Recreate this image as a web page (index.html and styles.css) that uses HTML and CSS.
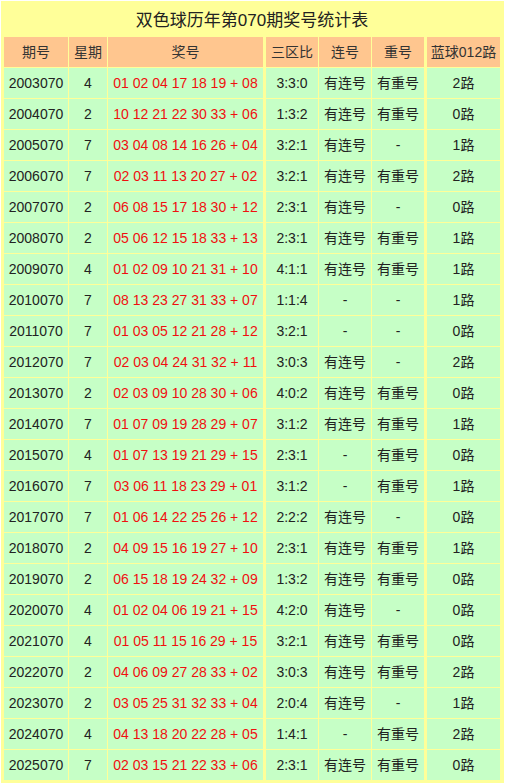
FILE: index.html
```html
<!DOCTYPE html>
<html lang="zh-CN">
<head>
<meta charset="utf-8">
<title>双色球历年第070期奖号统计表</title>
<link rel="stylesheet" href="styles.css">
</head>
<body>
<div class="box">
  <div class="title">双色球历年第070期奖号统计表</div>
  <table class="stats">
    <thead>
      <tr><th class="c1">期号</th><th class="c2">星期</th><th class="c3">奖号</th><th class="c4">三区比</th><th class="c5">连号</th><th class="c6">重号</th><th class="c7">蓝球012路</th></tr>
    </thead>
    <tbody>
      <tr><td>2003070</td><td>4</td><td class="num">01 02 04 17 18 19 + 08</td><td class="c4">3:3:0</td><td>有连号</td><td>有重号</td><td class="c7">2路</td></tr>
      <tr><td>2004070</td><td>2</td><td class="num">10 12 21 22 30 33 + 06</td><td class="c4">1:3:2</td><td>有连号</td><td>有重号</td><td class="c7">0路</td></tr>
      <tr><td>2005070</td><td>7</td><td class="num">03 04 08 14 16 26 + 04</td><td class="c4">3:2:1</td><td>有连号</td><td>-</td><td class="c7">1路</td></tr>
      <tr><td>2006070</td><td>7</td><td class="num">02 03 11 13 20 27 + 02</td><td class="c4">3:2:1</td><td>有连号</td><td>有重号</td><td class="c7">2路</td></tr>
      <tr><td>2007070</td><td>2</td><td class="num">06 08 15 17 18 30 + 12</td><td class="c4">2:3:1</td><td>有连号</td><td>-</td><td class="c7">0路</td></tr>
      <tr><td>2008070</td><td>2</td><td class="num">05 06 12 15 18 33 + 13</td><td class="c4">2:3:1</td><td>有连号</td><td>有重号</td><td class="c7">1路</td></tr>
      <tr><td>2009070</td><td>4</td><td class="num">01 02 09 10 21 31 + 10</td><td class="c4">4:1:1</td><td>有连号</td><td>有重号</td><td class="c7">1路</td></tr>
      <tr><td>2010070</td><td>7</td><td class="num">08 13 23 27 31 33 + 07</td><td class="c4">1:1:4</td><td>-</td><td>-</td><td class="c7">1路</td></tr>
      <tr><td>2011070</td><td>7</td><td class="num">01 03 05 12 21 28 + 12</td><td class="c4">3:2:1</td><td>-</td><td>-</td><td class="c7">0路</td></tr>
      <tr><td>2012070</td><td>7</td><td class="num">02 03 04 24 31 32 + 11</td><td class="c4">3:0:3</td><td>有连号</td><td>-</td><td class="c7">2路</td></tr>
      <tr><td>2013070</td><td>2</td><td class="num">02 03 09 10 28 30 + 06</td><td class="c4">4:0:2</td><td>有连号</td><td>有重号</td><td class="c7">0路</td></tr>
      <tr><td>2014070</td><td>7</td><td class="num">01 07 09 19 28 29 + 07</td><td class="c4">3:1:2</td><td>有连号</td><td>有重号</td><td class="c7">1路</td></tr>
      <tr><td>2015070</td><td>4</td><td class="num">01 07 13 19 21 29 + 15</td><td class="c4">2:3:1</td><td>-</td><td>有重号</td><td class="c7">0路</td></tr>
      <tr><td>2016070</td><td>7</td><td class="num">03 06 11 18 23 29 + 01</td><td class="c4">3:1:2</td><td>-</td><td>有重号</td><td class="c7">1路</td></tr>
      <tr><td>2017070</td><td>7</td><td class="num">01 06 14 22 25 26 + 12</td><td class="c4">2:2:2</td><td>有连号</td><td>-</td><td class="c7">0路</td></tr>
      <tr><td>2018070</td><td>2</td><td class="num">04 09 15 16 19 27 + 10</td><td class="c4">2:3:1</td><td>有连号</td><td>有重号</td><td class="c7">1路</td></tr>
      <tr><td>2019070</td><td>2</td><td class="num">06 15 18 19 24 32 + 09</td><td class="c4">1:3:2</td><td>有连号</td><td>有重号</td><td class="c7">0路</td></tr>
      <tr><td>2020070</td><td>4</td><td class="num">01 02 04 06 19 21 + 15</td><td class="c4">4:2:0</td><td>有连号</td><td>-</td><td class="c7">0路</td></tr>
      <tr><td>2021070</td><td>4</td><td class="num">01 05 11 15 16 29 + 15</td><td class="c4">3:2:1</td><td>有连号</td><td>有重号</td><td class="c7">0路</td></tr>
      <tr><td>2022070</td><td>2</td><td class="num">04 06 09 27 28 33 + 02</td><td class="c4">3:0:3</td><td>有连号</td><td>有重号</td><td class="c7">2路</td></tr>
      <tr><td>2023070</td><td>2</td><td class="num">03 05 25 31 32 33 + 04</td><td class="c4">2:0:4</td><td>有连号</td><td>-</td><td class="c7">1路</td></tr>
      <tr><td>2024070</td><td>4</td><td class="num">04 13 18 20 22 28 + 05</td><td class="c4">1:4:1</td><td>-</td><td>有重号</td><td class="c7">2路</td></tr>
      <tr><td>2025070</td><td>7</td><td class="num">02 03 15 21 22 33 + 06</td><td class="c4">2:3:1</td><td>有连号</td><td>有重号</td><td class="c7">0路</td></tr>
    </tbody>
  </table>
</div>
</body>
</html>
```
FILE: styles.css
```css
html, body {
  margin: 0;
  padding: 0;
  background: #ffffff;
}
body {
  font-family: "Liberation Sans", "Noto Sans CJK SC", sans-serif;
  padding: 1px 0 0 1px;
}
.box {
  width: 503px;
  box-sizing: border-box;
  background: #ffff99;
  padding: 0 3px 2px 2px;
}
.title {
  height: 35px;
  box-sizing: border-box;
  padding-top: 4px;
  line-height: 31px;
  text-align: center;
  font-size: 17px;
  color: #222;
}
.stats {
  border-collapse: separate;
  border-spacing: 1px;
  table-layout: fixed;
  width: 498px;
  font-size: 14px;
}
.stats th,
.stats td {
  box-sizing: border-box;
  height: 30px;
  padding: 0;
  line-height: 16px;
  text-align: center;
  vertical-align: middle;
  white-space: nowrap;
}
.stats th {
  background: #ffc68f;
  color: #333;
  font-weight: normal;
}
.stats td {
  background: #c6ffc6;
  color: #222;
}
.stats .c1 { width: 64px; }
.stats .c2 { width: 38px; }
.stats .c3 { width: 155px; }
.stats .c4 { width: 54px; border-left: 2px solid #ffff99; }
.stats .c5 { width: 52px; }
.stats .c6 { width: 52px; }
.stats .c7 { width: 75px; border-left: 2px solid #ffff99; }
.stats td.num {
  color: #f01010;
}
```
